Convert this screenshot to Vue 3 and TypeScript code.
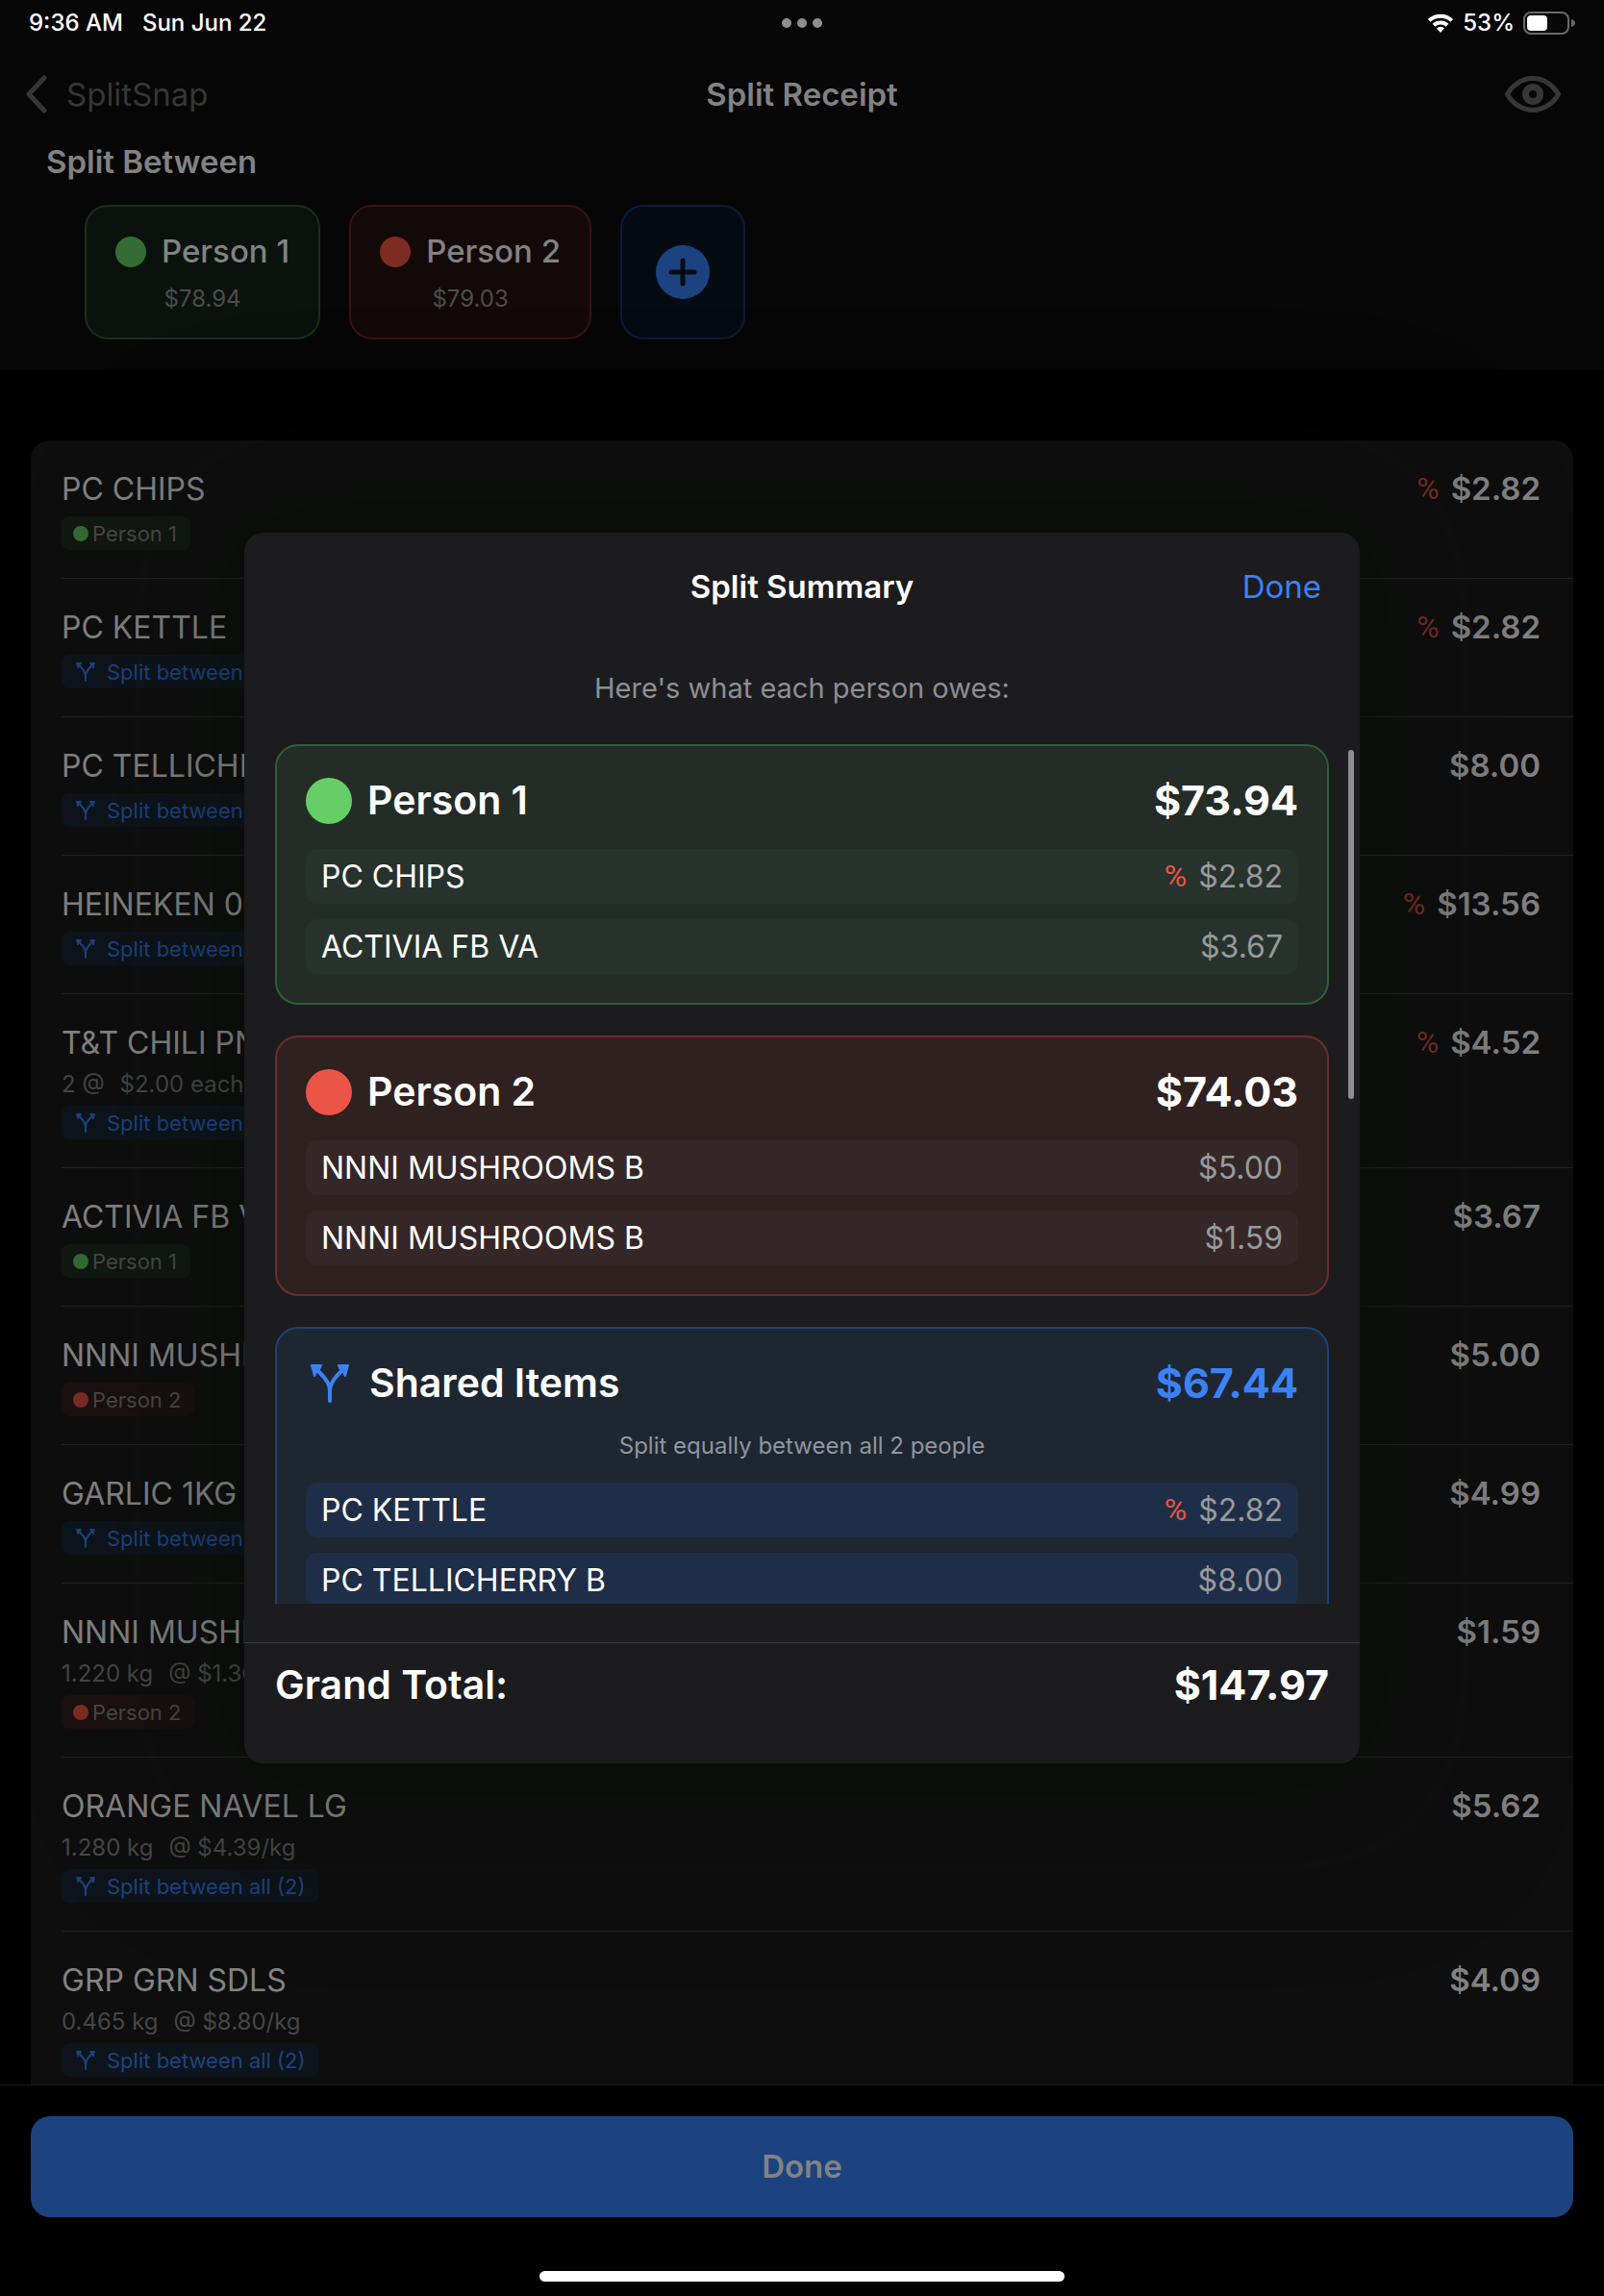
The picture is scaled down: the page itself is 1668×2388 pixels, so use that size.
<script setup lang="ts">
type Owner = 'green' | 'red' | 'shared'

interface ReceiptItem {
  name: string
  price: string
  owner: Owner
  taxed?: boolean
  detail?: [string, string]
}

interface SummaryRow {
  name: string
  price: string
  taxed?: boolean
}

interface SummaryCard {
  tone: Owner
  title: string
  total: string
  note?: string
  rows: SummaryRow[]
}

const people: { name: string; owes: string; tone: Owner }[] = [
  { name: 'Person 1', owes: '$78.94', tone: 'green' },
  { name: 'Person 2', owes: '$79.03', tone: 'red' },
]

const tagLabels: Record<Owner, string> = {
  green: 'Person 1',
  red: 'Person 2',
  shared: 'Split between all (2)',
}

const items: ReceiptItem[] = [
  { name: 'PC CHIPS', price: '$2.82', owner: 'green', taxed: true },
  { name: 'PC KETTLE', price: '$2.82', owner: 'shared', taxed: true },
  { name: 'PC TELLICHERRY B', price: '$8.00', owner: 'shared' },
  { name: 'HEINEKEN 0', price: '$13.56', owner: 'shared', taxed: true },
  { name: 'T&T CHILI PN', price: '$4.52', owner: 'shared', taxed: true, detail: ['2 @', '$2.00 each'] },
  { name: 'ACTIVIA FB VA', price: '$3.67', owner: 'green' },
  { name: 'NNNI MUSHROOMS B', price: '$5.00', owner: 'red' },
  { name: 'GARLIC 1KG', price: '$4.99', owner: 'shared' },
  { name: 'NNNI MUSHROOMS B', price: '$1.59', owner: 'red', detail: ['1.220 kg', '@ $1.30/kg'] },
  { name: 'ORANGE NAVEL LG', price: '$5.62', owner: 'shared', detail: ['1.280 kg', '@ $4.39/kg'] },
  { name: 'GRP GRN SDLS', price: '$4.09', owner: 'shared', detail: ['0.465 kg', '@ $8.80/kg'] },
]

const cards: SummaryCard[] = [
  {
    tone: 'green',
    title: 'Person 1',
    total: '$73.94',
    rows: [
      { name: 'PC CHIPS', price: '$2.82', taxed: true },
      { name: 'ACTIVIA FB VA', price: '$3.67' },
    ],
  },
  {
    tone: 'red',
    title: 'Person 2',
    total: '$74.03',
    rows: [
      { name: 'NNNI MUSHROOMS B', price: '$5.00' },
      { name: 'NNNI MUSHROOMS B', price: '$1.59' },
    ],
  },
  {
    tone: 'shared',
    title: 'Shared Items',
    total: '$67.44',
    note: 'Split equally between all 2 people',
    rows: [
      { name: 'PC KETTLE', price: '$2.82', taxed: true },
      { name: 'PC TELLICHERRY B', price: '$8.00' },
    ],
  },
]
</script>

<template>
  <div class="screen">
    <header class="top">
      <div class="status">
        <div class="status-side">
          <span>9:36 AM</span>
          <span>Sun Jun 22</span>
        </div>
        <div class="status-dots"><i></i><i></i><i></i></div>
        <div class="status-side status-right">
          <svg class="wifi" viewBox="0 0 28 20" aria-hidden="true">
            <path d="M2.2 7.4a17 17 0 0 1 23.6 0" />
            <path d="M7 12.2a10.2 10.2 0 0 1 14 0" />
            <path class="solid" d="M14 20l-4-4.6a5.8 5.8 0 0 1 8 0z" />
          </svg>
          <span>53%</span>
          <svg class="battery" viewBox="0 0 54 24" aria-hidden="true">
            <rect class="shell" x="1" y="1" width="46" height="22" rx="7" />
            <rect class="charge" x="4" y="4" width="21" height="16" rx="4" />
            <path class="nub" d="M50 8v8c3-1 4-2.500 4-4s-1-3-4-4z" />
          </svg>
        </div>
      </div>

      <nav class="nav">
        <button class="back" type="button">
          <svg viewBox="0 0 24 40" aria-hidden="true"><path d="M20 3L4 20l16 17" /></svg>
          SplitSnap
        </button>
        <h1>Split Receipt</h1>
        <button class="eye" type="button" aria-label="Preview">
          <svg viewBox="0 0 60 40" aria-hidden="true">
            <path d="M3.500 20C8 11.500 18 3.500 30 3.500S52 11.500 56.500 20C52 28.500 42 36.500 30 36.500S8 28.500 3.500 20z" />
            <circle cx="30" cy="20" r="7.500" />
          </svg>
        </button>
      </nav>

      <h2>Split Between</h2>
      <div class="people">
        <button v-for="p in people" :key="p.name" type="button" class="person" :class="p.tone">
          <span class="person-name"><i class="dot"></i>{{ p.name }}</span>
          <span class="person-owes">{{ p.owes }}</span>
        </button>
        <button type="button" class="person add" aria-label="Add person">
          <svg viewBox="0 0 56 56" aria-hidden="true">
            <circle cx="28" cy="28" r="28" />
            <path d="M28 16v24M16 28h24" />
          </svg>
        </button>
      </div>
    </header>

    <main class="list-area">
      <ul class="list">
        <li v-for="(item, i) in items" :key="i" class="item">
          <div class="item-info">
            <span class="item-name">{{ item.name }}</span>
            <span v-if="item.detail" class="item-detail">
              <span>{{ item.detail[0] }}</span><span>{{ item.detail[1] }}</span>
            </span>
            <span class="tag" :class="item.owner">
              <svg v-if="item.owner === 'shared'" class="fork" viewBox="0 0 40 40" aria-hidden="true">
                <path class="line" d="M20 38V28C20 19 13 12 7 6M20 28C20 19 27 12 33 6" />
                <path class="head" d="M1 1h10l-1.500 3.500L6 8l-2 4zM39 1H29l1.500 3.500L34 8l2 4z" />
              </svg>
              <i v-else class="dot"></i>
              {{ tagLabels[item.owner] }}
            </span>
          </div>
          <div class="item-price"><span v-if="item.taxed" class="tax">%</span>{{ item.price }}</div>
        </li>
      </ul>
    </main>

    <footer class="bottom">
      <button type="button" class="done">Done</button>
      <div class="home"></div>
    </footer>

    <div class="overlay">
      <section class="modal" role="dialog" aria-labelledby="summary-title">
        <header class="modal-head">
          <h2 id="summary-title">Split Summary</h2>
          <button type="button">Done</button>
        </header>
        <p class="intro">Here's what each person owes:</p>
        <div class="scroll-wrap">
          <div class="scroll">
            <article v-for="card in cards" :key="card.title" class="card" :class="card.tone">
              <div class="card-head">
                <svg v-if="card.tone === 'shared'" class="fork" viewBox="0 0 40 40" aria-hidden="true">
                  <path class="line" d="M20 38V28C20 19 13 12 7 6M20 28C20 19 27 12 33 6" />
                  <path class="head" d="M1 1h10l-1.500 3.500L6 8l-2 4zM39 1H29l1.500 3.500L34 8l2 4z" />
                </svg>
                <i v-else class="dot"></i>
                <h3>{{ card.title }}</h3>
                <strong>{{ card.total }}</strong>
              </div>
              <p v-if="card.note" class="note">{{ card.note }}</p>
              <ul class="rows">
                <li v-for="(row, i) in card.rows" :key="i">
                  <span>{{ row.name }}</span>
                  <span class="row-price"><span v-if="row.taxed" class="tax">%</span>{{ row.price }}</span>
                </li>
              </ul>
            </article>
          </div>
          <div class="thumb"></div>
        </div>
        <footer class="total">
          <span>Grand Total:</span>
          <strong>$147.97</strong>
        </footer>
      </section>
    </div>
  </div>
</template>

<style>
body {
  margin: 0;
  background: #000;
}
</style>

<style scoped>
.screen {
  position: relative;
  display: flex;
  flex-direction: column;
  height: 100vh;
  overflow: hidden;
  background: #000;
  color: #828282;
  font-family: Inter, "Liberation Sans", sans-serif;
  font-size: 33px;
  line-height: 41px;
}

h1,
h2,
h3,
p,
ul {
  margin: 0;
  padding: 0;
  font-size: inherit;
  list-style: none;
}

h1,
h2,
h3 {
  font-weight: 600;
}

button {
  margin: 0;
  padding: 0;
  border: 0;
  background: none;
  color: inherit;
  font: inherit;
  cursor: pointer;
}

svg {
  display: block;
  fill: none;
}

.dot {
  flex: none;
  border-radius: 50%;
}

/* Status bar, navigation and people */
.top {
  flex: none;
  padding-bottom: 32px;
  background: #060606;
}

.status {
  display: grid;
  grid-template-columns: 1fr auto 1fr;
  align-items: center;
  height: 48px;
  padding: 0 30px;
  color: #fff;
  font-size: 24px;
  font-weight: 500;
  line-height: 28px;
}

.status-side {
  display: flex;
  align-items: center;
  gap: 20px;
}

.status-right {
  justify-content: flex-end;
  gap: 9px;
}

.status-dots {
  display: flex;
  gap: 6px;
}

.status-dots i {
  width: 10px;
  height: 10px;
  border-radius: 50%;
  background: #8e8e8e;
}

.wifi {
  width: 28px;
  height: 20px;
  stroke: #fff;
  stroke-width: 4;
}

.wifi .solid {
  fill: #fff;
  stroke: none;
}

.battery {
  width: 54px;
  height: 24px;
}

.shell {
  stroke: #6a6a6a;
  stroke-width: 2;
}

.charge {
  fill: #fff;
}

.nub {
  fill: #6a6a6a;
}

.nav {
  display: grid;
  grid-template-columns: 1fr auto 1fr;
  align-items: center;
  height: 100px;
  padding: 0 26px;
}

.back {
  display: flex;
  align-items: center;
  justify-self: start;
  gap: 19px;
  color: #363636;
}

.back svg {
  width: 24px;
  height: 40px;
  stroke: #363636;
  stroke-width: 5;
  stroke-linecap: round;
  stroke-linejoin: round;
}

.eye {
  justify-self: end;
  margin-right: 18px;
}

.eye svg {
  width: 60px;
  height: 40px;
  stroke: #363636;
  stroke-width: 5;
}

.eye circle {
  stroke-width: 7;
}

.top > h2 {
  padding-left: 48px;
}

.people {
  display: flex;
  gap: 30px;
  padding: 24px 88px 0;
}

.person {
  display: flex;
  flex-direction: column;
  align-items: center;
  justify-content: center;
  gap: 14px;
  box-sizing: border-box;
  height: 140px;
  padding: 0 30px;
  border: 2px solid;
  border-radius: 24px;
}

.person.green {
  border-color: #16301a;
  background: #0b120d;
}

.person.red {
  border-color: #361412;
  background: #130909;
}

.person.add {
  padding: 0 35px;
  border-color: #0b1c36;
  background: #060b13;
}

.person-name {
  display: flex;
  align-items: center;
  gap: 16px;
  font-weight: 500;
}

.person-name .dot {
  width: 32px;
  height: 32px;
}

.person-owes {
  color: #4c4c4c;
  font-size: 24px;
  line-height: 29px;
}

.add svg {
  width: 56px;
  height: 56px;
}

.add circle {
  fill: #1c4380;
}

.add path {
  stroke: #060b13;
  stroke-width: 5;
  stroke-linecap: round;
}

.green .dot {
  background: #356b35;
}

.red .dot {
  background: #7d2c24;
}

/* Receipt items */
.list-area {
  flex: 1;
  min-height: 0;
  overflow: hidden;
  padding: 73px 32px 0;
}

.list {
  border-radius: 20px;
  background: #0e0e0e;
}

.item {
  display: flex;
  justify-content: space-between;
  align-items: flex-start;
  margin-left: 32px;
  padding: 30px 34px 29px 0;
  border-bottom: 1px solid #202020;
}

.item-info {
  display: flex;
  flex-direction: column;
  align-items: flex-start;
  gap: 8px;
}

.item-name {
  font-size: 32px;
}

.item-detail {
  display: flex;
  gap: 16px;
  color: #464646;
  font-size: 24px;
  line-height: 29px;
}

.item-price {
  display: flex;
  align-items: center;
  font-weight: 600;
}

.tax {
  margin-right: 12px;
  color: #7d2c24;
  font-family: Roboto, sans-serif;
  font-size: 32px;
  font-weight: 400;
}

.tag {
  display: flex;
  align-items: center;
  gap: 4px;
  height: 35px;
  padding: 0 14px 0 12px;
  border-radius: 8px;
  color: #484848;
  font-size: 22px;
  line-height: 28px;
}

.tag .dot {
  width: 16px;
  height: 16px;
}

.tag.green {
  background: #111711;
}

.tag.red {
  background: #1a100f;
}

.tag.shared {
  gap: 12px;
  padding-left: 15px;
  background: #0e141b;
  color: #1d437f;
}

.fork .line {
  stroke: currentColor;
  stroke-width: 4;
  stroke-linecap: round;
}

.fork .head {
  fill: currentColor;
  stroke: currentColor;
  stroke-width: 2;
  stroke-linejoin: round;
}

.tag .fork {
  width: 20px;
  height: 20px;
}

/* Bottom bar */
.bottom {
  display: flex;
  flex: none;
  flex-direction: column;
  align-items: center;
  gap: 56px;
  padding: 32px 32px 15px;
  border-top: 1px solid #1a1a1a;
  background: #000;
}

.done {
  width: 100%;
  height: 105px;
  border-radius: 20px;
  background: #1c4380;
  font-weight: 600;
}

.home {
  width: 34%;
  height: 11px;
  border-radius: 6px;
  background: #fff;
}

/* Summary dialog */
.overlay {
  position: absolute;
  inset: 0;
  display: flex;
  align-items: center;
  justify-content: center;
  pointer-events: none;
}

.modal {
  flex: 0 1 1160px;
  margin: 0 32px;
  border-radius: 20px;
  background: #1c1c1e;
  box-shadow: 0 0 160px 80px rgba(2, 16, 0, 0.2);
  color: #fff;
  pointer-events: auto;
}

.modal-head {
  display: grid;
  grid-template-columns: 1fr auto 1fr;
  align-items: center;
  height: 112px;
  padding: 0 40px;
}

.modal-head h2 {
  grid-column: 2;
}

.modal-head button {
  justify-self: end;
  color: #3b82f6;
}

.intro {
  padding: 32px 32px 40px;
  color: #8e8e93;
  font-size: 29px;
  line-height: 36px;
  text-align: center;
}

.scroll-wrap {
  position: relative;
}

.scroll {
  display: flex;
  flex-direction: column;
  gap: 32px;
  max-height: 894px;
  overflow-y: auto;
  padding: 0 32px;
  scrollbar-width: none;
}

.thumb {
  position: absolute;
  top: 6px;
  right: 6px;
  width: 6px;
  height: 363px;
  border-radius: 3px;
  background: #8e8e8e;
}

.card {
  display: flex;
  flex: none;
  flex-direction: column;
  gap: 24px;
  padding: 30px;
  border: 2px solid;
  border-radius: 24px;
}

.card.green {
  border-color: #2e5f36;
  background: #232c26;
}

.card.red {
  border-color: #692f2c;
  background: #2f2120;
}

.card.shared {
  border-color: #1f4273;
  background: #1e2731;
}

.card.green .dot {
  background: #67ce67;
}

.card.red .dot {
  background: #eb5545;
}

.card-head {
  display: flex;
  align-items: center;
  gap: 16px;
  height: 53px;
  font-size: 41px;
  line-height: 53px;
}

.card-head .dot {
  width: 48px;
  height: 48px;
}

.card-head .fork {
  width: 40px;
  height: 40px;
  margin: 0 5px;
  color: #3b82f6;
}

.card-head strong {
  margin-left: auto;
  font-size: 43px;
  font-weight: 700;
}

.shared .card-head strong {
  color: #3b82f6;
}

.note {
  color: #8f95a0;
  font-size: 24px;
  line-height: 29px;
  text-align: center;
}

.rows {
  display: flex;
  flex-direction: column;
  gap: 16px;
  font-size: 32px;
}

.rows li {
  display: flex;
  justify-content: space-between;
  padding: 8px 16px;
  border-radius: 12px;
}

.green .rows li {
  background: #28322c;
}

.red .rows li {
  background: #352728;
}

.shared .rows li {
  background: #1f2e48;
}

.row-price {
  display: flex;
  align-items: center;
  color: #979a9c;
}

.modal .tax {
  color: #eb5545;
}

.total {
  display: flex;
  justify-content: space-between;
  margin-top: 40px;
  padding: 16px 32px 55px;
  border-top: 1px solid #3d3d3f;
  font-size: 41px;
  font-weight: 600;
  line-height: 54px;
}

.total strong {
  font-size: 43px;
  font-weight: 700;
}
</style>
